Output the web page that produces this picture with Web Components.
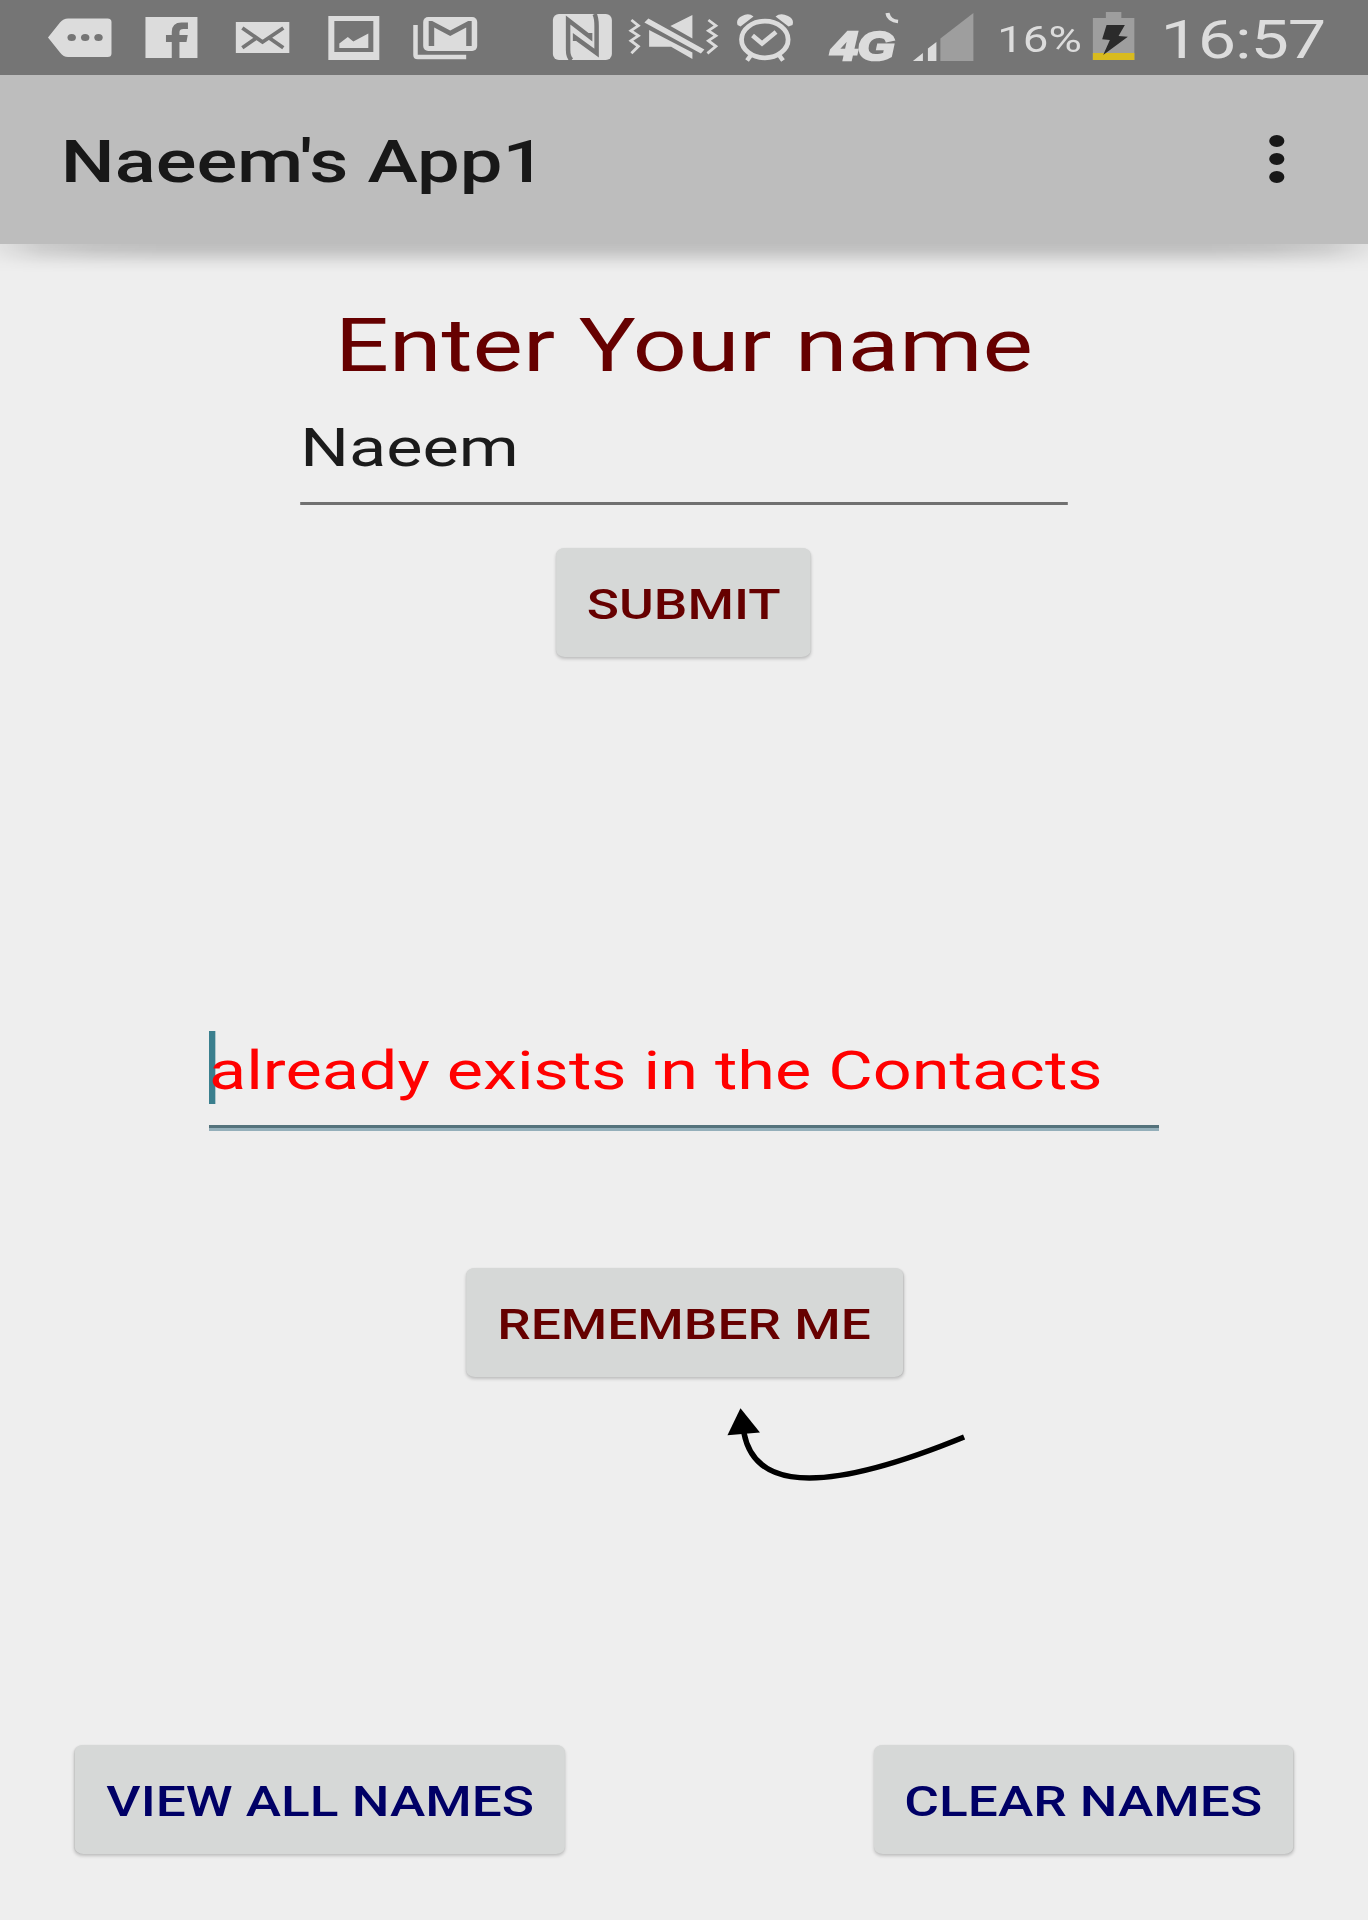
<!DOCTYPE html>
<html lang="en">
<head>
<meta charset="utf-8">
<title>Naeem's App1</title>
<style>
html,body{margin:0;padding:0;background:#eee}
body{width:1368px;height:1920px;overflow:hidden}
</style>
</head>
<body>
<device-screen>
  <status-bar></status-bar>
  <app-bar>Naeem's App1</app-bar>
  <name-form></name-form>
</device-screen>
<script>
const define = (name, html, after) => customElements.define(name, class extends HTMLElement {
  constructor() {
    super();
    this.attachShadow({ mode: 'open' }).innerHTML = html;
  }
  connectedCallback() { if (after) after(this); }
});

/* The screen is laid out 1080 wide and stretched to the window width. */
define('device-screen', `<style>
:host{display:flex;flex-direction:column;width:1080px;height:1920px;transform:scaleX(1.266667);transform-origin:0 0;
 background:#eee;font-family:Roboto,sans-serif;overflow:hidden;color:#1b1b1b}
</style><slot></slot>`);

/* Icon cell: "from" and "span" are in window pixels, so shapes inside use window coordinates. */
define('status-icon', `<style>
:host{display:block;height:75px;flex:none}
svg{display:block;width:100%;height:75px}
</style><svg preserveAspectRatio="none"></svg>`, el => {
  const from = +el.getAttribute('from'), span = +el.getAttribute('span');
  el.style.width = (span / 1.266667) + 'px';
  const svg = el.shadowRoot.querySelector('svg');
  svg.setAttribute('viewBox', `${from} 0 ${span} 75`);
  svg.innerHTML = shapes[el.getAttribute('name')] || '';
});

const L = '#dcdcdc', D = '#757575';
const shapes = {
  tag: `<path fill="${L}" d="M48 37.500 60 22.500Q63.500 18.500 68 18.500H107.500Q111.500 18.500 111.500 22V53.500Q111.500 57 107.500 57H68Q63.500 57 60 52.500Z"/>
    <g fill="${D}"><ellipse cx="71.700" cy="37.500" rx="4.200" ry="3.500"/><ellipse cx="85.200" cy="37.500" rx="4.200" ry="3.500"/><ellipse cx="98.500" cy="37.500" rx="4.200" ry="3.500"/></g>`,
  facebook: `<path fill="${L}" d="M145 17H197V58H145Z"/><path fill="${D}" d="M171.300 58V42H165.500V35H171.300V32Q171.300 22.500 181 22.500H187.500V29H183Q179 29 179 32V35H187.300L186 42H179V58Z"/>`,
  mail: `<path fill="${L}" d="M235.500 22H289V53H235.500Z"/><path fill="none" stroke="${D}" stroke-width="3.800" d="M242 28 262.200 42 283 28M242 47.800 256 38M283 47.800 269 38"/>`,
  image: `<path fill="${L}" fill-rule="evenodd" d="M328 16H379V60H328ZM334 21V52H373V21Z"/><path fill="${L}" d="M339 48V43.500L347.500 37 353 41.500 368 33.500V48Z"/>`,
  gmail: `<path fill="none" stroke="${L}" stroke-width="4.500" d="M415.300 25V55Q415.300 57 417.500 57H466"/><rect x="423" y="17" width="54" height="34" rx="5" fill="${L}"/><path fill="${D}" d="M428.500 46V21H432L450 30.500 468 21H471.500V46H466V27.500L450 36 434 27.500V46Z"/>`,
  nfc: `<rect x="553.300" y="14" width="59" height="46" rx="6" fill="${L}"/><path fill="none" stroke="${D}" stroke-width="4.500" d="M572 60Q568.500 57 568.500 50V20L590.500 37V33M595 14Q597 18 597 26V53L575.500 37.500V41"/>`,
  mute: `<g fill="none" stroke="${L}" stroke-width="2.800"><path d="M632 20 639 25.700 631.500 30.700 639 35.700 631.500 40.700 639 46.300 632 53.300"/><path d="M709 20 716.500 25.700 709 30.700 716.500 35.700 709 40.700 716.500 46.300 708 53.300"/></g>
    <path fill="${L}" d="M671 26 693 15V38.500ZM649.700 30V46.700H671.700L693 59V52.500ZM645 22.500 649 18.500 705 49.500 701.500 53.500Z"/>`,
  alarm: `<g fill="none" stroke="${L}"><ellipse cx="765.300" cy="39.500" rx="23.300" ry="18.300" stroke-width="4.800"/><path stroke-width="4.500" d="M753 35.500 762.500 43.500 776.500 32"/><path stroke-width="4.500" d="M751.500 55 747.500 60.500M779.500 55 783.500 60.500"/></g>
    <path fill="${L}" d="M738 25Q736 19 742.500 16 749 12.500 754 16.500L741 26.500ZM793 25Q795 19 788.500 16 781 12.500 776 16.500L789 26.500Z"/>`,
  signal: `<path fill="${L}" d="M913.500 61 923.500 53V61ZM928.500 61V48.500L937 42V61Z"/><path fill="#9e9e9e" d="M941 61V38.500L974 13V61Z"/>`,
  battery: `<path fill="#9e9e9e" d="M1092 60V18H1105V12H1120.500V18H1133.500V60Z"/><path fill="#d9bb1f" d="M1092 53H1133.500V60H1092Z"/><path fill="#2b2b2b" d="M1105.700 25H1124L1117.700 36 1127 36.700 1102.300 55 1109 40 1101.300 39.300Z"/>`
};

define('status-bar', `<style>
:host{display:flex;height:75px;flex:none;background:#757575;color:#dcdcdc}
.t{flex:none;white-space:nowrap;line-height:80px;height:75px}
.g{width:67.100px;position:relative}
.g span{display:block;font:italic bold 41px/93px "Liberation Sans",sans-serif;transform:scaleX(.92);transform-origin:0 0;-webkit-text-stroke:2.600px #dcdcdc;padding-left:10px}
.g svg{position:absolute;left:52px;top:10px}
.p{width:74.700px;padding-left:9.700px;font-size:36px;letter-spacing:0;line-height:81px}
.c{padding-left:16.300px;font-size:54px;line-height:80.500px;letter-spacing:-.9px}
.gap{flex:none;width:31.600px}
</style>
<status-icon name="tag" from="0" span="130"></status-icon>
<status-icon name="facebook" from="130" span="85"></status-icon>
<status-icon name="mail" from="215" span="95"></status-icon>
<status-icon name="image" from="310" span="85"></status-icon>
<status-icon name="gmail" from="395" span="105"></status-icon>
<div class="gap"></div>
<status-icon name="nfc" from="540" span="80"></status-icon>
<status-icon name="mute" from="620" span="105"></status-icon>
<status-icon name="alarm" from="725" span="95"></status-icon>
<div class="t g"><span>4G</span><svg width="14" height="14" viewBox="0 0 14 14"><path d="M1.500 3Q3 11 10 11.500" fill="none" stroke="#dcdcdc" stroke-width="3.500"/></svg></div>
<status-icon name="signal" from="905" span="80"></status-icon>
<div class="t p">16%</div>
<status-icon name="battery" from="1091" span="48"></status-icon>
<div class="t c">16:57</div>`);

define('app-bar', `<style>
:host{display:flex;flex:none;height:169px;padding:3px 66.200px 0 48px;box-sizing:border-box;background:#bdbdbd;align-items:center;justify-content:space-between;
 font-size:60px;font-weight:500;color:#181818;position:relative;z-index:1}
:host::after{content:"";position:absolute;left:0;right:0;top:100%;height:28px;
 background:linear-gradient(rgba(0,0,0,.2),rgba(0,0,0,.175) 6px,rgba(0,0,0,.11) 13px,rgba(0,0,0,.04) 20px,rgba(0,0,0,0));
 -webkit-mask-image:linear-gradient(to right,rgba(0,0,0,.25),rgba(0,0,0,.7) 3%,rgba(0,0,0,.92) 7%,#000 12%,#000 88%,rgba(0,0,0,.92) 93%,rgba(0,0,0,.7) 97%,rgba(0,0,0,.25));mask-image:linear-gradient(to right,rgba(0,0,0,.25),rgba(0,0,0,.7) 3%,rgba(0,0,0,.92) 7%,#000 12%,#000 88%,rgba(0,0,0,.92) 93%,rgba(0,0,0,.7) 97%,rgba(0,0,0,.25))}
.m{display:flex;flex-direction:column;gap:6px;margin-top:-5px}
.m i{width:12px;height:12px;border-radius:50%;background:#181818}
</style><span><slot></slot></span><div class="m"><i></i><i></i><i></i></div>`);

define('flat-button', `<style>
:host{display:flex;align-items:center;justify-content:center;flex:none;height:108.500px;box-sizing:border-box;padding-top:3px;border-radius:7px;background:#d6d8d7;
 font-size:42px;font-weight:500;white-space:nowrap;color:#600;box-shadow:0 2px 3px rgba(0,0,0,.2),0 0 1px rgba(0,0,0,.08)}
:host([tone=navy]){color:#006}
</style><slot></slot>`);

define('edit-line', `<style>
:host{display:block;flex:none;position:relative;box-sizing:border-box;font-size:54px;line-height:66px;white-space:nowrap;border-bottom:3px solid #707070}
:host([focused]){color:#f00;border-bottom-color:#54727b;box-shadow:0 3px #94afba}
i{display:none;position:absolute;left:0;top:-7px;width:4.740px;height:73px;background:#3a7f8e}
:host([focused]) i{display:block}
span{position:relative}
</style><i></i><span><slot></slot></span>`);

define('curved-arrow', `<style>
:host{display:block;flex:none;width:205.300px;height:90px}
svg{display:block;width:100%;height:100%}
</style><svg viewBox="720 1400 260 90" preserveAspectRatio="none"><path d="M744.500 1433C752 1472 789 1509 964.600 1437" fill="none" stroke="#000" stroke-width="5.500"/><path d="M741 1408.300 728 1435.300 760.500 1432.600Z"/></svg>`);

define('name-form', `<style>
:host{display:flex;flex-direction:column;flex:1}
.h{align-self:center;margin-top:57.400px;font-size:75px;line-height:88px;height:88px;color:#600;white-space:nowrap}
.name{margin:26px 0 0 237px;width:605.500px;height:89.600px}
.submit{margin:43.500px 0 0 439.200px;width:201.300px}
.msg{margin:381px 0 0 165px;width:750px;height:90px}
.rem{margin:140.500px 0 0 367.500px;width:345px}
curved-arrow{margin:23px 0 0 568px}
.row{display:flex;justify-content:space-between;margin-top:255.500px;padding:0 59.300px}
</style>
<div class="h">Enter Your name</div>
<edit-line class="name">Naeem</edit-line>
<flat-button class="submit">SUBMIT</flat-button>
<edit-line class="msg" focused>already exists in the Contacts</edit-line>
<flat-button class="rem">REMEMBER ME</flat-button>
<curved-arrow></curved-arrow>
<div class="row"><flat-button tone="navy" style="width:387px">VIEW ALL NAMES</flat-button><flat-button tone="navy" style="width:331px">CLEAR NAMES</flat-button></div>`);
</script>
</body>
</html>
